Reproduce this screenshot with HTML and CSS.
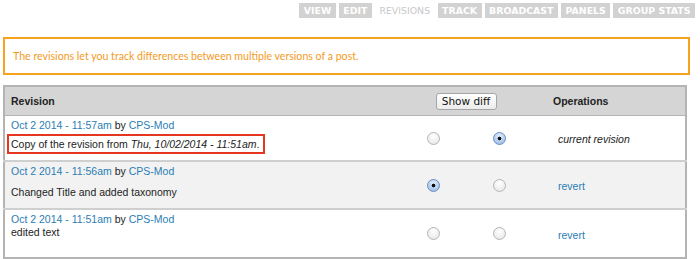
FILE: index.html
```html
<!DOCTYPE html>
<html lang="en">
<head>
  <meta charset="UTF-8" />
  <title>Revisions</title>
  <link rel="stylesheet" href="styles.css">
</head>
<body>
  <ul class="tabs">
    <li><a href="#">VIEW</a></li>
    <li><a href="#">EDIT</a></li>
    <li class="active"><a href="#">REVISIONS</a></li>
    <li><a href="#">TRACK</a></li>
    <li><a href="#">BROADCAST</a></li>
    <li><a href="#">PANELS</a></li>
    <li><a href="#">GROUP STATS</a></li>
  </ul>

  <div class="help">The revisions let you track differences between multiple versions of a post.</div>

  <table class="revisions">
    <thead>
      <tr>
        <th class="col-rev">Revision</th>
        <th class="col-diff" colspan="2"><button class="btn-diff">Show diff</button></th>
        <th class="col-ops">Operations</th>
      </tr>
    </thead>
    <tbody>
      <tr>
        <td>
          <div class="meta"><a href="#">Oct 2 2014 - 11:57am</a> by <a href="#">CPS-Mod</a></div>
          <p class="log highlight">Copy of the revision from <em>Thu, 10/02/2014 - 11:51am</em>.</p>
        </td>
        <td class="radio"><span class="rb"></span></td>
        <td class="radio"><span class="rb on"></span></td>
        <td class="ops"><em>current revision</em></td>
      </tr>
      <tr class="even">
        <td>
          <div class="meta"><a href="#">Oct 2 2014 - 11:56am</a> by <a href="#">CPS-Mod</a></div>
          <p class="log">Changed Title and added taxonomy</p>
        </td>
        <td class="radio"><span class="rb on"></span></td>
        <td class="radio"><span class="rb"></span></td>
        <td class="ops"><a href="#">revert</a></td>
      </tr>
      <tr class="last">
        <td>
          <div class="meta"><a href="#">Oct 2 2014 - 11:51am</a> by <a href="#">CPS-Mod</a></div>
          <div class="log-plain">edited text</div>
        </td>
        <td class="radio"><span class="rb"></span></td>
        <td class="radio"><span class="rb"></span></td>
        <td class="ops"><a href="#">revert</a></td>
      </tr>
    </tbody>
  </table>
</body>
</html>
```

FILE: styles.css
```css
body {
  margin: 0;
  background: #ffffff;
  font-family: 'Liberation Sans', Arial, sans-serif;
  font-size: 10.5px;
  color: #222;
}

.tabs {
  display: flex;
  justify-content: flex-end;
  gap: 3px;
  list-style: none;
  margin: 3px 5px 0 0;
  padding: 0;
}

.tabs a {
  display: block;
  height: 15px;
  line-height: 15px;
  padding: 0 4.5px;
  background: #d2d2d2;
  color: #ffffff;
  font-family: 'DejaVu Sans', Verdana, sans-serif;
  font-size: 9.4px;
  font-weight: bold;
  text-decoration: none;
}

.tabs .active a {
  background: none;
  color: #c8c8c8;
  font-weight: normal;
}

.help {
  margin: 19px 10px 0 3px;
  height: 34px;
  line-height: 34px;
  padding: 0 8px;
  border: 2px solid #f9a21d;
  color: #f39a1e;
  font-family: Lato, sans-serif;
  font-size: 10.6px;
}

.revisions {
  margin: 10px 0 0 3px;
  width: 684px;
  border-collapse: collapse;
  border: 2px solid #b4b4b4;
}

.revisions th {
  height: 28px;
  padding: 0;
  background: #d5d5d5;
  text-align: left;
  font-weight: bold;
  font-size: 10.5px;
  color: #222;
  border-bottom: 1px solid #b4b4b4;
}

.col-rev {
  width: 389px;
  padding-left: 6px !important;
}

.col-diff {
  width: 132px;
  text-align: center !important;
}

.col-ops {
  padding-left: 21px !important;
}

.btn-diff {
  height: 17px;
  width: 61px;
  padding: 0;
  border: 1px solid #a6a6a6;
  border-radius: 3px;
  background: linear-gradient(#ffffff, #ececec);
  font-family: 'DejaVu Sans', sans-serif;
  font-size: 10.5px;
  color: #111;
}

.revisions td {
  vertical-align: top;
  padding: 2px 0 0 6px;
  border-bottom: 2px solid #cfcfcf;
}

.revisions tr:first-child td {
  height: 42px;
}

.revisions tr.even td {
  height: 44px;
  background: #f2f2f2;
}

.revisions tr.last td {
  height: 45px;
  border-bottom: none;
}

a {
  color: #2a7db4;
  text-decoration: none;
}

.meta {
  line-height: 14px;
}

.log {
  margin: 7px 0 0 0;
  line-height: 14px;
}

.log.highlight {
  display: inline-block;
  margin: 2px 0 0 -4px;
  padding: 1px 4px 1px 2px;
  border: 2px solid #e5371f;
  line-height: 14px;
}

.log-plain {
  line-height: 13px;
}

.revisions td.radio {
  padding: 0;
  vertical-align: middle;
  text-align: center;
  width: 66px;
}

.rb {
  display: inline-block;
  width: 11px;
  height: 11px;
  border: 1px solid #b5b5b5;
  border-radius: 50%;
  background: radial-gradient(circle at 50% 30%, #ffffff, #e4e4e4);
  vertical-align: middle;
}

.rb.on {
  border-color: #6f8fbf;
  background: radial-gradient(circle, #111 0 1.6px, transparent 2.2px),
              radial-gradient(circle at 50% 30%, #e4f0fc, #8fb5e6);
}

.revisions td.ops {
  vertical-align: middle;
  padding-left: 26px;
}

.ops em {
  color: #222;
}
```
